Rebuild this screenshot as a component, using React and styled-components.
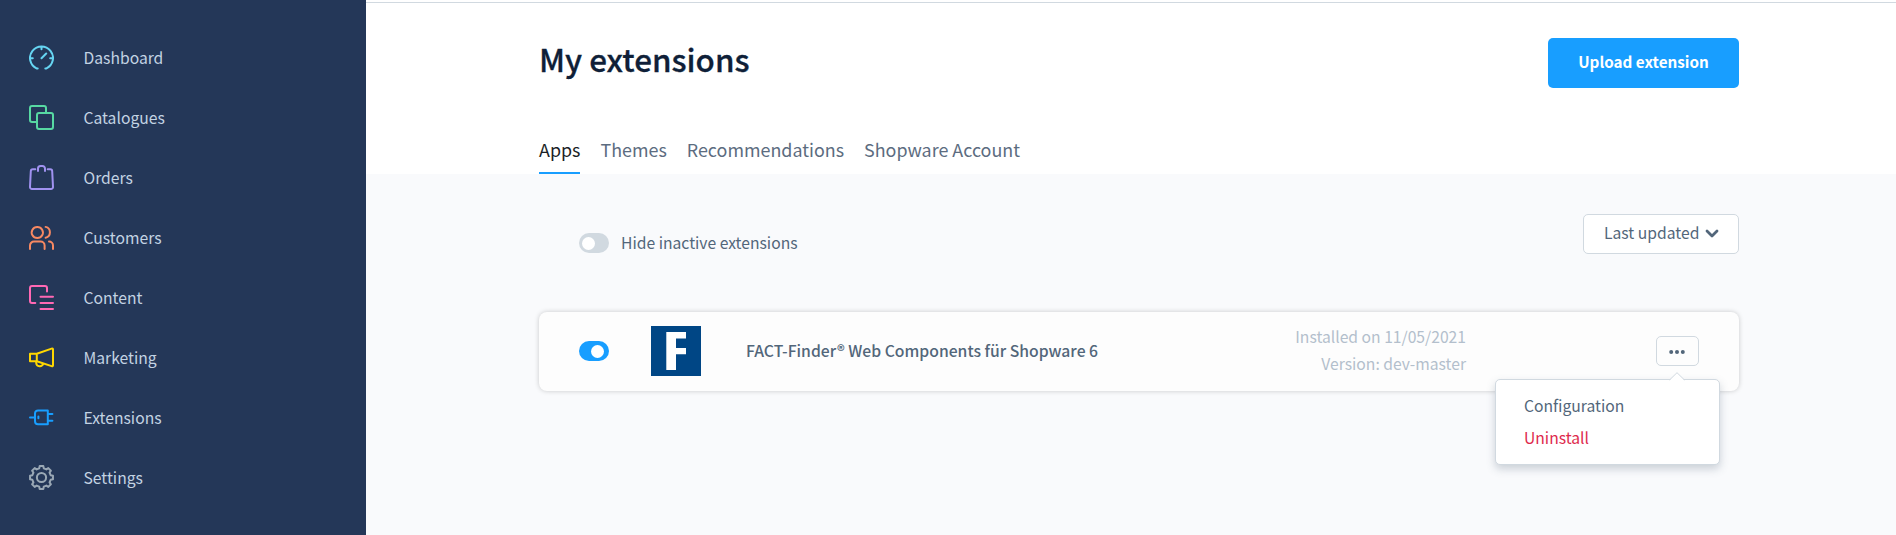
import React from "react";
import styled, { createGlobalStyle } from "styled-components";

const Global = createGlobalStyle`
  * { box-sizing: border-box; }
  body {
    margin: 0;
    background: #f9fafc;
    font-family: "Noto Sans CJK SC", "Noto Sans", sans-serif;
    font-size: 15.68px;
    color: #52667a;
  }
  button { font: inherit; color: inherit; margin: 0; padding: 0; }
`;

const Page = styled.div`
  display: flex;
  height: 535px;
  overflow: hidden;
`;

const Sidebar = styled.nav`
  width: 366px;
  flex: none;
  background: #243758;
  padding-top: 28px;
`;

const NavItem = styled.a`
  display: flex;
  align-items: center;
  height: 60px;
  padding-left: 29px;
  gap: 29.5px;
  color: #c3d3e3;
  line-height: 24px;
`;

const NavIcon = styled.svg`
  width: 25px;
  height: 25px;
  margin-bottom: 1px;
  flex: none;
  fill: none;
  stroke: ${(p) => p.$color};
  stroke-width: 2;
  stroke-linecap: round;
  stroke-linejoin: round;
`;

const Main = styled.main`
  flex: 1;
  display: flex;
  flex-direction: column;
  align-items: center;
`;

const Header = styled.header`
  width: 100%;
  height: 174px;
  background: #fff;
  display: flex;
  flex-direction: column;
  align-items: center;
  padding-top: 2px;
`;

const Divider = styled.div`
  width: 100%;
  height: 1px;
  background: #d1d9e0;
`;

const Column = styled.div`
  width: 1200px;
  margin-left: 16px;
`;

const TitleRow = styled(Column)`
  display: flex;
  justify-content: space-between;
  align-items: flex-start;
  padding-top: 35px;
  height: 85px;
`;

const Title = styled.h1`
  margin: 0;
  font-size: 31.4px;
  font-weight: 500;
  line-height: 42px;
  color: #0f1f38;
  -webkit-text-stroke: 0.3px #0f1f38;
`;

const PrimaryButton = styled.button`
  width: 191px;
  height: 50px;
  border: 0;
  border-radius: 5px;
  background: #189eff;
  color: #fff;
  font-size: 15.25px;
  font-weight: 700;
  padding-bottom: 4px;
`;

const Tabs = styled(Column)`
  display: flex;
  gap: 20px;
  margin-top: auto;
  font-size: 17.9px;
`;

const Tab = styled.a`
  height: 44px;
  line-height: 38px;
  color: ${(p) => (p.$active ? "#1b1f26" : "#5c6c80")};
  border-bottom: 2px solid ${(p) => (p.$active ? "#189eff" : "transparent")};
`;

const Filters = styled(Column)`
  display: flex;
  justify-content: space-between;
  padding: 40px 0 0 40px;
  height: 138px;
`;

const SwitchField = styled.label`
  display: flex;
  align-items: center;
  gap: 12px;
  height: 58px;
`;

const SwitchLabel = styled.span`
  padding-bottom: 2px;
`;

const Switch = styled.span`
  width: 30px;
  height: 20px;
  flex: none;
  border-radius: 10px;
  background: ${(p) => (p.$on ? "#189eff" : "#d1d9e0")};
  display: flex;
  align-items: center;
  justify-content: ${(p) => (p.$on ? "flex-end" : "flex-start")};
  padding: 0 5px 0 3px;
`;

const Knob = styled.span`
  width: 13px;
  height: 13px;
  border-radius: 50%;
  background: #fff;
`;

const Select = styled.button`
  display: flex;
  align-items: center;
  justify-content: space-between;
  width: 156px;
  height: 40px;
  padding: 0 19px 3px 20px;
  background: #fff;
  border: 1px solid #d1d9e0;
  border-radius: 5px;
`;

const Chevron = styled.svg`
  width: 14px;
  height: 9px;
  margin-top: 2px;
`;

const Card = styled(Column)`
  display: flex;
  align-items: center;
  height: 79px;
  padding: 0 40px 1px;
  background: #fdfdfd;
  border-radius: 8px;
  box-shadow: 0 0 5px rgba(0, 0, 0, 0.2);
`;

const Logo = styled.svg`
  width: 50px;
  height: 50px;
  margin: 0 45px 0 42px;
`;

const Name = styled.div`
  padding-bottom: 2px;
  font-size: 15.73px;
  font-weight: 500;
  line-height: 27px;
`;

const Meta = styled.div`
  margin-left: auto;
  width: 260px;
  padding-bottom: 2px;
  text-align: right;
  line-height: 27px;
  color: #b3bfcc;
`;

const MenuAnchor = styled.div`
  position: relative;
  margin-left: 190px;
`;

const MoreButton = styled.button`
  display: flex;
  align-items: center;
  justify-content: center;
  width: 43px;
  height: 30px;
  padding: 1px 1px 0 0;
  background: transparent;
  border: 1px solid #d1d9e0;
  border-radius: 5px;
`;

const Menu = styled.div`
  position: absolute;
  top: 43px;
  right: -21px;
  width: 225px;
  height: 86px;
  padding: 10px 28px;
  background: #fff;
  border: 1px solid #d1d9e0;
  border-radius: 5px;
  box-shadow: 0 4px 8px rgba(82, 102, 122, 0.28);
`;

const Arrow = styled.svg`
  position: absolute;
  top: -8px;
  right: 34px;
  width: 16px;
  height: 9px;
`;

const MenuItem = styled.div`
  line-height: 32px;
  color: ${(p) => (p.$danger ? "#de294c" : "#52667a")};
`;

const gear = (() => {
  const pts = [];
  for (let i = 0; i < 8; i++) {
    [[-14, 9.4], [-9, 11.6], [9, 11.6], [14, 9.4]].forEach(([d, r]) => {
      const a = ((i * 45 + d) * Math.PI) / 180;
      pts.push(`${(12.5 + r * Math.sin(a)).toFixed(2)} ${(12.5 - r * Math.cos(a)).toFixed(2)}`);
    });
  }
  return `M${pts.join("L")}Z`;
})();

const nav = [
  ["Dashboard", "#66d5f2", <path d="M8.7 23.4H7.5a11.5 11.5 0 1 1 10 0H16.3M12.5 2V4.2M1.4 13.3H3.8M21.2 13.3H23.6M12.5 13.3L17.2 8.5" />],
  ["Catalogues", "#57d9a3", <path d="M8 17H3a2 2 0 0 1-2-2V3a2 2 0 0 1 2-2H15a2 2 0 0 1 2 2V8M10 8H22a2 2 0 0 1 2 2V22a2 2 0 0 1-2 2H10a2 2 0 0 1-2-2V10a2 2 0 0 1 2-2Z" />],
  ["Orders", "#a092f0", <path d="M6.3 4.3H3.8a2 2 0 0 0-2 2L1 21.9A2 2 0 0 0 3 24H22a2 2 0 0 0 2-2.1L23.2 6.3a2 2 0 0 0-2-2H18.7M9 6V3.5A2.5 2.5 0 0 1 11.5 1H13.5A2.5 2.5 0 0 1 16 3.5V6" />],
  ["Customers", "#f88962", <path d="M1 24V20.5A4 4 0 0 1 5 16.5H11.6A4 4 0 0 1 15.6 20.5V24M20 16.5A4 4 0 0 1 24 20.5V24M8.3 1.9a5.6 5.6 0 1 0 .01 0M16.6 1.9A5.6 5.6 0 0 1 16.6 12.8" />],
  ["Content", "#ff68b4", <path d="M6.3 18H3a2 2 0 0 1-2-2V3a2 2 0 0 1 2-2H16a2 2 0 0 1 2 2V6.5M11.5 11.8H24M11.5 17.9H24M11.5 24H24" />],
  ["Marketing", "#ffd700", <path d="M1 8.8H7.8V16.2H1ZM7.8 8.8L22.6 3.6Q24 3.1 24 4.5V20.2Q24 21.6 22.6 21.1L7.8 16.2M7.2 16.4V18a3.6 3.6 0 0 0 7 .8" />],
  ["Extensions", "#189eff", <path d="M1 12.4H6M9 5.4H18.8V19.2H9A3 3 0 0 1 6 16.2V8.4A3 3 0 0 1 9 5.4ZM18.8 9H23.4M18.8 15.7H23.4M9.4 11.5V13.3" />],
  ["Settings", "#9aa8b5", <><path d={gear} /><circle cx="12.5" cy="12.5" r="4.6" /></>],
];

export default function App() {
  return (
    <Page>
      <Global />
      <Sidebar>
        {nav.map(([label, color, icon]) => (
          <NavItem key={label}>
            <NavIcon viewBox="0 0 25 25" $color={color}>{icon}</NavIcon>
            {label}
          </NavItem>
        ))}
      </Sidebar>
      <Main>
        <Header>
          <Divider />
          <TitleRow>
            <Title>My extensions</Title>
            <PrimaryButton>Upload extension</PrimaryButton>
          </TitleRow>
          <Tabs>
            <Tab $active>Apps</Tab>
            <Tab>Themes</Tab>
            <Tab>Recommendations</Tab>
            <Tab>Shopware Account</Tab>
          </Tabs>
        </Header>
        <Filters>
          <SwitchField>
            <Switch><Knob /></Switch>
            <SwitchLabel>Hide inactive extensions</SwitchLabel>
          </SwitchField>
          <Select>
            Last updated
            <Chevron viewBox="0 0 14 9" fill="none" stroke="#52667a" strokeWidth="2.8" strokeLinecap="round" strokeLinejoin="round">
              <path d="M2 2L7 7L12 2" />
            </Chevron>
          </Select>
        </Filters>
        <Card>
          <Switch $on><Knob /></Switch>
          <Logo viewBox="0 0 50 50">
            <rect width="50" height="50" fill="#004685" />
            <path d="M15.3 6H35V12.5H25V22H35V28.3H25V44H15.3Z" fill="#fff" />
          </Logo>
          <Name>FACT-Finder® Web Components für Shopware 6</Name>
          <Meta>
            <div>Installed on 11/05/2021</div>
            <div>Version: dev-master</div>
          </Meta>
          <MenuAnchor>
            <MoreButton>
              <svg width="16" height="4" viewBox="0 0 16 4" fill="#52667a">
                <circle cx="2.2" cy="2" r="2" />
                <circle cx="8" cy="2" r="2" />
                <circle cx="13.8" cy="2" r="2" />
              </svg>
            </MoreButton>
            <Menu>
              <Arrow viewBox="0 0 16 9">
                <path d="M0.5 8.5L8 1L15.5 8.5V9H0.5Z" fill="#fff" />
                <path d="M0.5 8L8 0.7L15.5 8" fill="none" stroke="#d1d9e0" />
              </Arrow>
              <MenuItem>Configuration</MenuItem>
              <MenuItem $danger>Uninstall</MenuItem>
            </Menu>
          </MenuAnchor>
        </Card>
      </Main>
    </Page>
  );
}
